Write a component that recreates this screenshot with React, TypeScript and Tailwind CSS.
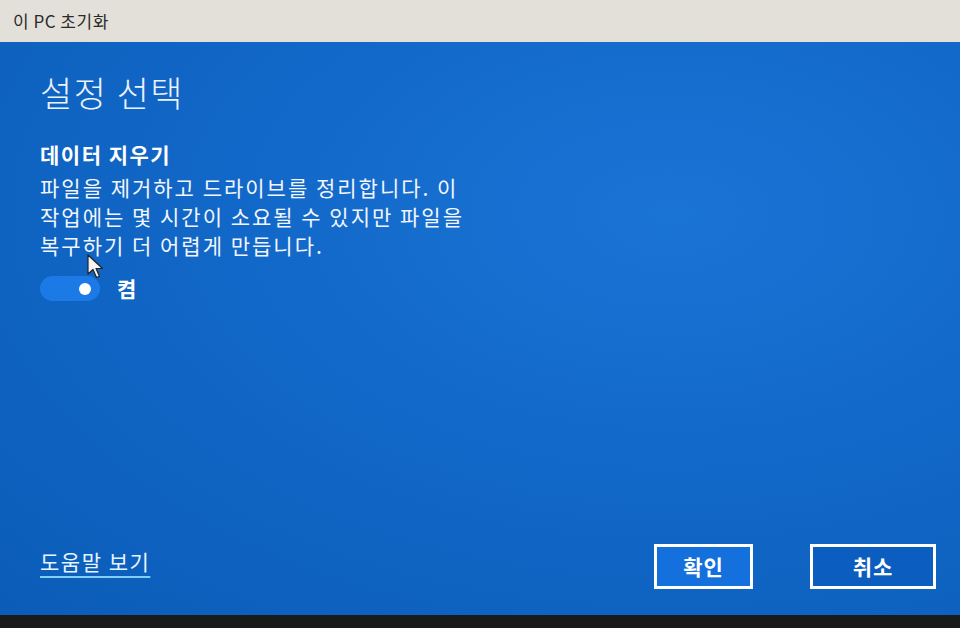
import React from "react";

const font = { fontFamily: '"Noto Sans CJK KR", "Noto Sans", sans-serif' };

function Cursor() {
  return (
    <svg
      className="absolute left-[87px] top-[212px]"
      width="20"
      height="26"
      viewBox="0 0 20 26"
    >
      <path
        d="M1 1 L1 20 L6 15.5 L9.5 23.5 L12.5 22.2 L9 14.5 L15.5 14.5 Z"
        fill="#f4f4f4"
        stroke="#222"
        strokeWidth="1.2"
        strokeLinejoin="round"
      />
    </svg>
  );
}

export default function App() {
  return (
    <div className="w-[960px] h-[628px] flex flex-col overflow-hidden bg-[#151515]" style={font}>
      {/* title bar */}
      <div className="h-[42px] shrink-0 bg-[#e3e0d9] flex items-center pl-[13px] text-[17px] tracking-[0.5px] text-[#2a2a2a]">
        이 PC 초기화
      </div>

      {/* main panel */}
      <div className="relative flex-1 flex flex-col bg-[radial-gradient(ellipse_at_70%_30%,#1a74d6_0%,#1268c8_45%,#0b5cb8_100%)] px-[40px] text-white">
        <h1 className="mt-[30px] text-[35px] font-light leading-[40px] tracking-[1.5px] text-[#eaf2fc]">
          설정 선택
        </h1>

        <h2 className="mt-[28px] text-[21px] font-bold leading-[28px] tracking-[1.5px]">데이터 지우기</h2>
        <p className="mt-[5px] whitespace-nowrap text-[21px] leading-[29px] tracking-[2px] text-[#f2f6fc]">
          파일을 제거하고 드라이브를 정리합니다. 이
          <br />
          작업에는 몇 시간이 소요될 수 있지만 파일을
          <br />
          복구하기 더 어렵게 만듭니다.
        </p>

        <div className="mt-[16px] flex items-center gap-[17px]">
          <div className="w-[60px] h-[25px] rounded-full bg-[#1c7ae6] flex items-center justify-end pr-[9px]">
            <div className="w-[12px] h-[12px] rounded-full bg-white" />
          </div>
          <span className="text-[21px] font-bold leading-none">켬</span>
        </div>

        <Cursor />

        <div className="mt-auto mb-[26px] flex items-end justify-between">
          <a className="mb-[15px] text-[21px] leading-[26px] tracking-[1.5px] text-[#e6f4ff] underline underline-offset-[6px] decoration-[#7fd0ff] decoration-2">
            도움말 보기
          </a>
          <div className="flex gap-[57px] mr-[-16px]">
            <button className="w-[99px] h-[45px] border-[3px] border-white bg-[#1370dc] text-[21px] font-bold tracking-[1px]">
              확인
            </button>
            <button className="w-[126px] h-[45px] border-[3px] border-white bg-[#0c5dc0] text-[21px] font-bold tracking-[1px]">
              취소
            </button>
          </div>
        </div>
      </div>

      {/* bottom strip */}
      <div className="h-[13px] shrink-0 bg-[#1a1a1a]" />
    </div>
  );
}
